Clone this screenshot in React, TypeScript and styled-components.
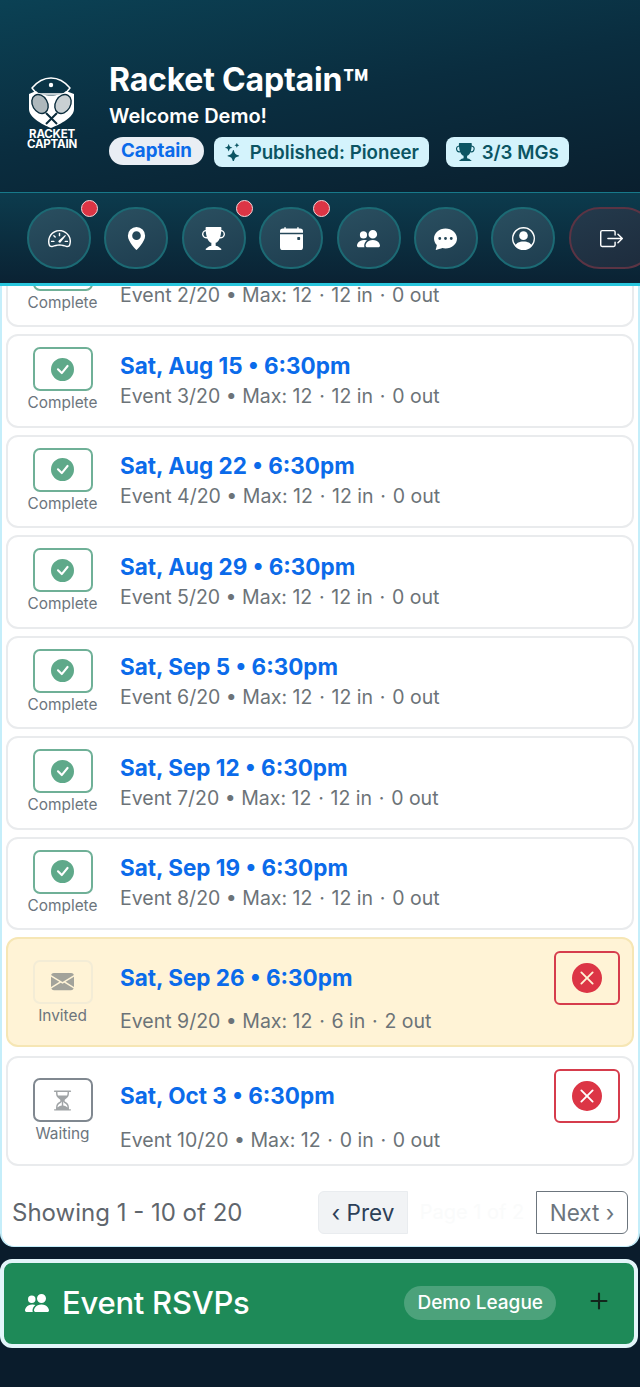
import React from "react";
import styled, { createGlobalStyle } from "styled-components";
import {
  BsCalendarEventFill,
  BsCheckCircleFill,
  BsChatDotsFill,
  BsBoxArrowRight,
  BsEnvelopeFill,
  BsGeoAltFill,
  BsHourglassSplit,
  BsPeopleFill,
  BsPersonCircle,
  BsPlus,
  BsSpeedometer2,
  BsStars,
  BsTrophyFill,
  BsXCircleFill,
} from "react-icons/bs";

const GlobalStyle = createGlobalStyle`
  html, body {
    margin: 0;
    padding: 0;
    background: #0a1c2c;
    font-family: Inter, "Liberation Sans", sans-serif;
  }
  * { box-sizing: border-box; }
`;

const Page = styled.div`
  width: 640px;
  height: 1387px;
  overflow: hidden;
  background: #0a1c2c;
`;

const Header = styled.header`
  height: 192px;
  display: flex;
  align-items: flex-start;
  padding: 62px 0 0 24px;
  background: linear-gradient(170deg, #0b4154 0%, #0a2d3f 50%, #0a1f2e 100%);
`;

const LogoWrap = styled.div`
  width: 56px;
  margin-top: 15px;
  display: flex;
  flex-direction: column;
  align-items: center;
  color: #fff;
`;

const LogoText = styled.div`
  font-size: 11.5px;
  line-height: 10px;
  font-weight: 700;
  letter-spacing: -0.2px;
  text-align: center;
  white-space: nowrap;
`;

const HeaderText = styled.div`
  margin-left: 29px;
  display: flex;
  flex-direction: column;
`;

const Title = styled.h1`
  margin: 0;
  height: 36px;
  font-size: 32px;
  line-height: 36px;
  font-weight: 700;
  letter-spacing: -0.2px;
  color: #fff;
  white-space: nowrap;
  sup {
    font-size: 42px;
    line-height: 0;
    vertical-align: -9px;
    font-weight: 700;
  }
`;

const Welcome = styled.div`
  margin-top: 6px;
  font-size: 20px;
  line-height: 24px;
  font-weight: 600;
  color: #fff;
`;

const Badges = styled.div`
  margin-top: 9px;
  display: flex;
  align-items: flex-start;
  gap: 10px;
`;

const RoleBadge = styled.span`
  height: 28px;
  padding: 0 12px;
  border-radius: 14px;
  background: #e9eef4;
  color: #0b6bea;
  font-size: 18.7px;
  font-weight: 700;
  line-height: 28px;
`;

const InfoBadge = styled.span<{ $gapLeft?: number }>`
  height: 30px;
  margin-left: ${(p) => p.$gapLeft ?? 0}px;
  padding: 0 10px;
  border-radius: 8px;
  background: #d4f3fc;
  color: #0b5563;
  font-size: 18.7px;
  font-weight: 600;
  display: flex;
  align-items: center;
  gap: 7px;
  white-space: nowrap;
`;

const Nav = styled.nav`
  height: 94px;
  display: flex;
  align-items: flex-start;
  gap: 13.4px;
  padding: 14px 0 0 27px;
  border-top: 1px solid #17798a;
  border-bottom: 3px solid #29c5dc;
  background: linear-gradient(180deg, #0c3b4d 0%, #0a2233 100%);
  overflow: hidden;
`;

const NavButton = styled.div<{ $danger?: boolean }>`
  position: relative;
  flex: 0 0 64px;
  height: 62px;
  border-radius: 31px;
  display: flex;
  align-items: center;
  justify-content: center;
  color: #fff;
  font-size: 23px;
  background: ${(p) =>
    p.$danger
      ? "linear-gradient(160deg, #243a4c, #1d2b3c)"
      : "linear-gradient(160deg, #2a4f60, #1e3d4f)"};
  border: 2px solid ${(p) => (p.$danger ? "#5b3444" : "#1c6a74")};
  ${(p) => p.$danger && "flex-basis: 86px;"}
`;

const Dot = styled.span`
  position: absolute;
  top: -9px;
  right: -9px;
  width: 17px;
  height: 17px;
  border-radius: 50%;
  background: #dc3545;
  border: 1px solid #f3d5d8;
`;

const Panel = styled.section`
  height: 961px;
  overflow: hidden;
  background: #fff;
  border-left: 2px solid #c5eefa;
  border-right: 2px solid #c5eefa;
  border-bottom: 1px solid #c5eefa;
  border-radius: 0 0 14px 14px;
`;

const List = styled.div`
  margin: -153px 4px 0;
  display: flex;
  flex-direction: column;
  gap: 7px;
`;

const Card = styled.div<{ $invited?: boolean; $open?: boolean }>`
  display: flex;
  align-items: center;
  padding: ${(p) => (p.$open ? "11px 12px 9px 0" : "11px 12px 11px 0")};
  margin-bottom: ${(p) => (p.$invited ? 1.5 : 0)}px;
  border-radius: 12px;
  border: 2px solid ${(p) => (p.$invited ? "#f6e6b4" : "#e9ebed")};
  background: ${(p) => (p.$invited ? "#fff3d6" : "#fff")};
`;

const StatusCol = styled.div<{ $open?: boolean }>`
  flex: 0 0 112px;
  padding-right: 3px;
  padding-top: ${(p) => (p.$open ? 1 : 0)}px;
  display: flex;
  flex-direction: column;
  align-items: center;
`;

const StatusBox = styled.div<{ $tone: string; $icon: string }>`
  width: 60px;
  height: 44px;
  border-radius: 7px;
  display: flex;
  align-items: center;
  justify-content: center;
  border: 2px solid ${(p) => p.$tone};
  color: ${(p) => p.$icon};
  font-size: 23px;
`;

const StatusLabel = styled.div`
  font-size: 15.4px;
  line-height: 23.5px;
  color: #6c757d;
`;

const Info = styled.div`
  flex: 1;
  min-width: 0;
`;

const TitleRow = styled.div<{ $tall?: boolean }>`
  display: flex;
  align-items: center;
  justify-content: space-between;
  min-height: ${(p) => (p.$tall ? 55 : 30)}px;
  margin-bottom: ${(p) => (p.$tall ? 1 : 0)}px;
`;

const DateLink = styled.a`
  font-size: 22.5px;
  line-height: 30px;
  font-weight: 700;
  color: #0b6bea;
`;

const Meta = styled.div`
  font-size: 19.5px;
  line-height: 30px;
  color: #6c7378;
  white-space: nowrap;
`;

const MidDot = styled.span`
  margin: 0 1.25px;
`;

const CancelButton = styled.button`
  width: 66px;
  height: 54px;
  padding: 0;
  border-radius: 6px;
  border: 2px solid #d63c4c;
  background: transparent;
  color: #dc3545;
  font-size: 30px;
  display: flex;
  align-items: center;
  justify-content: center;
`;

const Pager = styled.div`
  display: flex;
  align-items: center;
  justify-content: space-between;
  padding: 25px 10px 0 10px;
`;

const Showing = styled.div`
  font-size: 24px;
  line-height: 43px;
  color: #5f666d;
`;

const PagerGroup = styled.div`
  display: flex;
  height: 43px;
`;

const PrevButton = styled.div`
  width: 90px;
  border: 1px solid #e9ecef;
  border-radius: 6px 0 0 6px;
  background: #f1f3f5;
  color: #2c4058;
  font-size: 22.5px;
  display: flex;
  align-items: center;
  justify-content: center;
`;

const PageLabel = styled.div`
  width: 128px;
  font-size: 20px;
  color: #fafbfb;
  display: flex;
  align-items: center;
  justify-content: center;
`;

const NextButton = styled.div`
  width: 92px;
  border: 1.5px solid #6c757d;
  border-radius: 0 6px 6px 0;
  background: #fff;
  color: #6c757d;
  font-size: 22.5px;
  display: flex;
  align-items: center;
  justify-content: center;
`;

const Accordion = styled.div`
  margin: 12px 2px 0 0;
  height: 89px;
  display: flex;
  align-items: center;
  padding: 0 18px 2px 21px;
  border: 4px solid #e3f5fa;
  border-radius: 12px;
  background: #1e8a58;
  color: #fff;
`;

const AccordionIcon = styled.span`
  font-size: 24px;
  display: flex;
  margin-right: 13px;
`;

const AccordionTitle = styled.div`
  flex: 1;
  font-size: 31px;
  font-weight: 500;
  letter-spacing: -0.25px;
`;

const LeagueChip = styled.span`
  height: 34px;
  padding: 0 13px;
  border-radius: 17px;
  background: #4ca27b;
  font-size: 19px;
  font-weight: 500;
  line-height: 34px;
  margin-right: 26px;
`;

const PlusIcon = styled.span`
  display: flex;
  font-size: 34px;
  margin-bottom: 4px;
  color: #12261c;
`;

const Logo = () => (
  <svg width="48" height="52" viewBox="0 0 48 52" fill="none" aria-hidden="true">
    <path d="M4 11 C9 5 16 1 23 1 C30 1 37 5 42 11 L37 17 H9 Z" stroke="#fff" strokeWidth="1.5" strokeLinejoin="round" />
    <circle cx="23" cy="8" r="2.2" fill="#fff" />
    <path d="M1 17 L8 14 C13 20 33 20 38 14 L46 17 V32 C46 40 33 47 23 51 C13 47 1 40 1 32 Z" fill="#fff" />
    <ellipse cx="12" cy="27" rx="7.5" ry="10" transform="rotate(-30 12 27)" fill="#aeb8bc" stroke="#0b2c3c" strokeWidth="1.4" />
    <ellipse cx="35" cy="27" rx="7.5" ry="10" transform="rotate(30 35 27)" fill="#c9d0d3" stroke="#0b2c3c" strokeWidth="1.4" />
    <path d="M18 36 L29 47 M29 36 L18 47" stroke="#0b2c3c" strokeWidth="2" />
  </svg>
);

type Status = "complete" | "invited" | "waiting";

const statusStyles = {
  complete: { tone: "#6fb097", icon: "#5fa98a", label: "Complete", glyph: <BsCheckCircleFill /> },
  invited: { tone: "#f3ecd6", icon: "#a3a39b", label: "Invited", glyph: <BsEnvelopeFill /> },
  waiting: { tone: "#808890", icon: "#a0a4a6", label: "Waiting", glyph: <BsHourglassSplit /> },
};

const events: { date: string; meta: string; status: Status }[] = [
  { date: "Sat, Aug 1 • 6:30pm", meta: "Event 1/20 • Max: 12 · 12 in · 0 out", status: "complete" },
  { date: "Sat, Aug 8 • 6:30pm", meta: "Event 2/20 • Max: 12 · 12 in · 0 out", status: "complete" },
  { date: "Sat, Aug 15 • 6:30pm", meta: "Event 3/20 • Max: 12 · 12 in · 0 out", status: "complete" },
  { date: "Sat, Aug 22 • 6:30pm", meta: "Event 4/20 • Max: 12 · 12 in · 0 out", status: "complete" },
  { date: "Sat, Aug 29 • 6:30pm", meta: "Event 5/20 • Max: 12 · 12 in · 0 out", status: "complete" },
  { date: "Sat, Sep 5 • 6:30pm", meta: "Event 6/20 • Max: 12 · 12 in · 0 out", status: "complete" },
  { date: "Sat, Sep 12 • 6:30pm", meta: "Event 7/20 • Max: 12 · 12 in · 0 out", status: "complete" },
  { date: "Sat, Sep 19 • 6:30pm", meta: "Event 8/20 • Max: 12 · 12 in · 0 out", status: "complete" },
  { date: "Sat, Sep 26 • 6:30pm", meta: "Event 9/20 • Max: 12 · 6 in · 2 out", status: "invited" },
  { date: "Sat, Oct 3 • 6:30pm", meta: "Event 10/20 • Max: 12 · 0 in · 0 out", status: "waiting" },
];

const navItems = [
  { icon: <BsSpeedometer2 />, dot: true },
  { icon: <BsGeoAltFill />, dot: false },
  { icon: <BsTrophyFill />, dot: true },
  { icon: <BsCalendarEventFill />, dot: true },
  { icon: <BsPeopleFill />, dot: false },
  { icon: <BsChatDotsFill />, dot: false },
  { icon: <BsPersonCircle />, dot: false },
];

export default function App() {
  return (
    <Page>
      <GlobalStyle />
      <Header>
        <LogoWrap>
          <Logo />
          <LogoText>
            RACKET
            <br />
            CAPTAIN
          </LogoText>
        </LogoWrap>
        <HeaderText>
          <Title>
            Racket Captain<sup>™</sup>
          </Title>
          <Welcome>Welcome Demo!</Welcome>
          <Badges>
            <RoleBadge>Captain</RoleBadge>
            <InfoBadge>
              <BsStars />
              Published: Pioneer
            </InfoBadge>
            <InfoBadge $gapLeft={7}>
              <BsTrophyFill />
              3/3 MGs
            </InfoBadge>
          </Badges>
        </HeaderText>
      </Header>

      <Nav>
        {navItems.map((item, i) => (
          <NavButton key={i}>
            {item.icon}
            {item.dot && <Dot />}
          </NavButton>
        ))}
        <NavButton $danger>
          <BsBoxArrowRight />
        </NavButton>
      </Nav>

      <Panel>
        <List>
          {events.map((ev) => {
            const s = statusStyles[ev.status];
            const open = ev.status !== "complete";
            const parts = ev.meta.split(" · ");
            return (
              <Card key={ev.date} $invited={ev.status === "invited"} $open={open}>
                <StatusCol $open={open}>
                  <StatusBox $tone={s.tone} $icon={s.icon}>
                    {s.glyph}
                  </StatusBox>
                  <StatusLabel>{s.label}</StatusLabel>
                </StatusCol>
                <Info>
                  <TitleRow $tall={open}>
                    <DateLink>{ev.date}</DateLink>
                    {open && (
                      <CancelButton>
                        <BsXCircleFill />
                      </CancelButton>
                    )}
                  </TitleRow>
                  <Meta>
                    {parts[0]} <MidDot>·</MidDot> {parts[1]} <MidDot>·</MidDot> {parts[2]}
                  </Meta>
                </Info>
              </Card>
            );
          })}
        </List>
        <Pager>
          <Showing>Showing 1 - 10 of 20</Showing>
          <PagerGroup>
            <PrevButton>‹ Prev</PrevButton>
            <PageLabel>Page 1 of 2</PageLabel>
            <NextButton>Next ›</NextButton>
          </PagerGroup>
        </Pager>
      </Panel>

      <Accordion>
        <AccordionIcon>
          <BsPeopleFill />
        </AccordionIcon>
        <AccordionTitle>Event RSVPs</AccordionTitle>
        <LeagueChip>Demo League</LeagueChip>
        <PlusIcon>
          <BsPlus />
        </PlusIcon>
      </Accordion>
    </Page>
  );
}
